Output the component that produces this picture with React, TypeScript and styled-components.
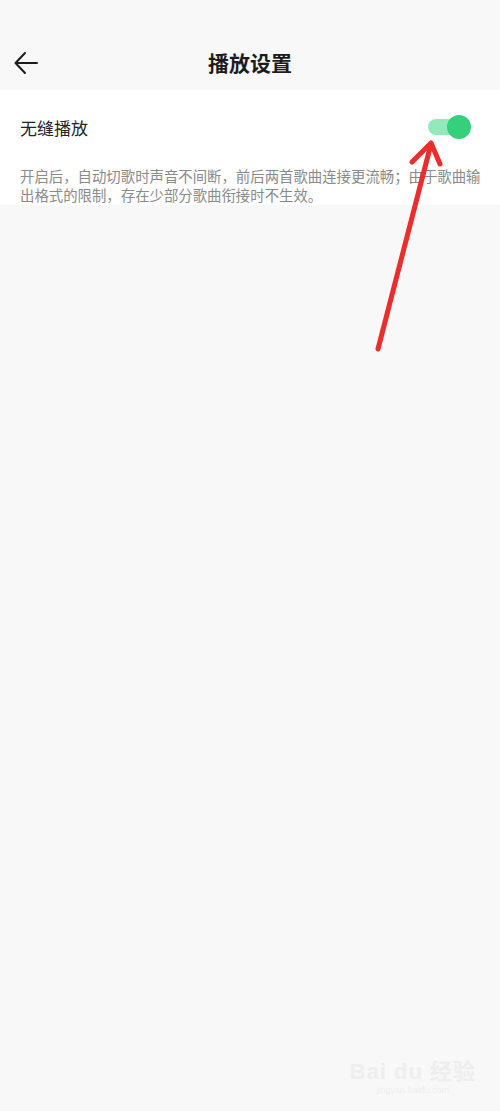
import React from 'react';
import styled, { createGlobalStyle } from 'styled-components';

const GlobalStyle = createGlobalStyle`
  html, body {
    margin: 0;
    padding: 0;
    background: #f8f8f8;
  }
  body {
    font-family: "Noto Sans CJK SC", "Noto Sans", sans-serif;
  }
`;

const Page = styled.div`
  position: relative;
  width: 500px;
  min-height: 1111px;
  background: #f8f8f8;
  overflow: hidden;
`;

const StatusBar = styled.div`
  height: 36px;
`;

const NavBar = styled.div`
  height: 54px;
  display: flex;
  align-items: center;
  justify-content: center;
  position: relative;
`;

const BackButton = styled.button`
  position: absolute;
  left: 12px;
  top: 50%;
  transform: translateY(-50%);
  width: 28px;
  height: 28px;
  padding: 0;
  border: none;
  background: transparent;
  display: flex;
  align-items: center;
  justify-content: center;
  cursor: pointer;
`;

const Title = styled.h1`
  margin: 0 0 2px;
  font-size: 21px;
  font-weight: 700;
  color: #1c1c1c;
  letter-spacing: 0;
`;

const Card = styled.section`
  background: #ffffff;
  padding-bottom: 1px;
`;

const Row = styled.div`
  height: 74px;
  display: flex;
  align-items: center;
  justify-content: space-between;
  padding: 0 30px 0 20px;
`;

const Label = styled.span`
  font-size: 17px;
  color: #222222;
`;

const Track = styled.div<{ $on: boolean }>`
  position: relative;
  width: 42px;
  height: 16px;
  border-radius: 8px;
  background: ${(p) => (p.$on ? '#93e8bc' : '#dcdcdc')};
  cursor: pointer;
`;

const Knob = styled.div<{ $on: boolean }>`
  position: absolute;
  top: -4px;
  left: ${(p) => (p.$on ? '19px' : '-1px')};
  width: 24px;
  height: 24px;
  border-radius: 50%;
  background: ${(p) => (p.$on ? '#34d07c' : '#ffffff')};
`;

const Description = styled.p`
  margin: 0;
  padding: 2px 6px 0 20px;
  font-size: 14.4px;
  line-height: 19px;
  color: #8a8a8a;
`;

const Arrow = styled.svg`
  position: absolute;
  left: 0;
  top: 0;
  pointer-events: none;
`;

const Watermark = styled.div`
  position: absolute;
  right: 24px;
  bottom: 16px;
  display: flex;
  flex-direction: column;
  align-items: center;
  color: #eeeeee;
  font-family: "Liberation Sans", "Noto Sans CJK SC", sans-serif;
`;

const MarkTop = styled.div`
  font-size: 22px;
  font-weight: 700;
  letter-spacing: 1px;
`;

const MarkUrl = styled.div`
  font-size: 9px;
`;

function Toggle(props: { on: boolean; onChange: (v: boolean) => void }) {
  return (
    <Track $on={props.on} onClick={() => props.onChange(!props.on)}>
      <Knob $on={props.on} />
    </Track>
  );
}

export default function App() {
  const [gapless, setGapless] = React.useState(true);

  return (
    <Page>
      <GlobalStyle />
      <StatusBar />
      <NavBar>
        <BackButton aria-label="返回">
          <svg width="26" height="24" viewBox="0 0 26 24" fill="none">
            <path
              d="M24 12H3M12 2L2.5 12L12 22"
              stroke="#1c1c1c"
              strokeWidth="2"
              strokeLinecap="round"
              strokeLinejoin="round"
            />
          </svg>
        </BackButton>
        <Title>播放设置</Title>
      </NavBar>
      <Card>
        <Row>
          <Label>无缝播放</Label>
          <Toggle on={gapless} onChange={setGapless} />
        </Row>
        <Description>
          开启后，自动切歌时声音不间断，前后两首歌曲连接更流畅；由于歌曲输出格式的限制，存在少部分歌曲衔接时不生效。
        </Description>
      </Card>

      {/* red pointer drawn over the toggle */}
      <Arrow width="500" height="400" viewBox="0 0 500 400">
        <g stroke="#ea2e2c" strokeWidth="5" strokeLinecap="round" strokeLinejoin="round" fill="none">
          <path d="M378 349L431 144" />
          <path d="M412 162L431 143L440 164" />
        </g>
      </Arrow>

      <Watermark>
        <MarkTop>Bai du 经验</MarkTop>
        <MarkUrl>jingyan.baidu.com</MarkUrl>
      </Watermark>
    </Page>
  );
}
